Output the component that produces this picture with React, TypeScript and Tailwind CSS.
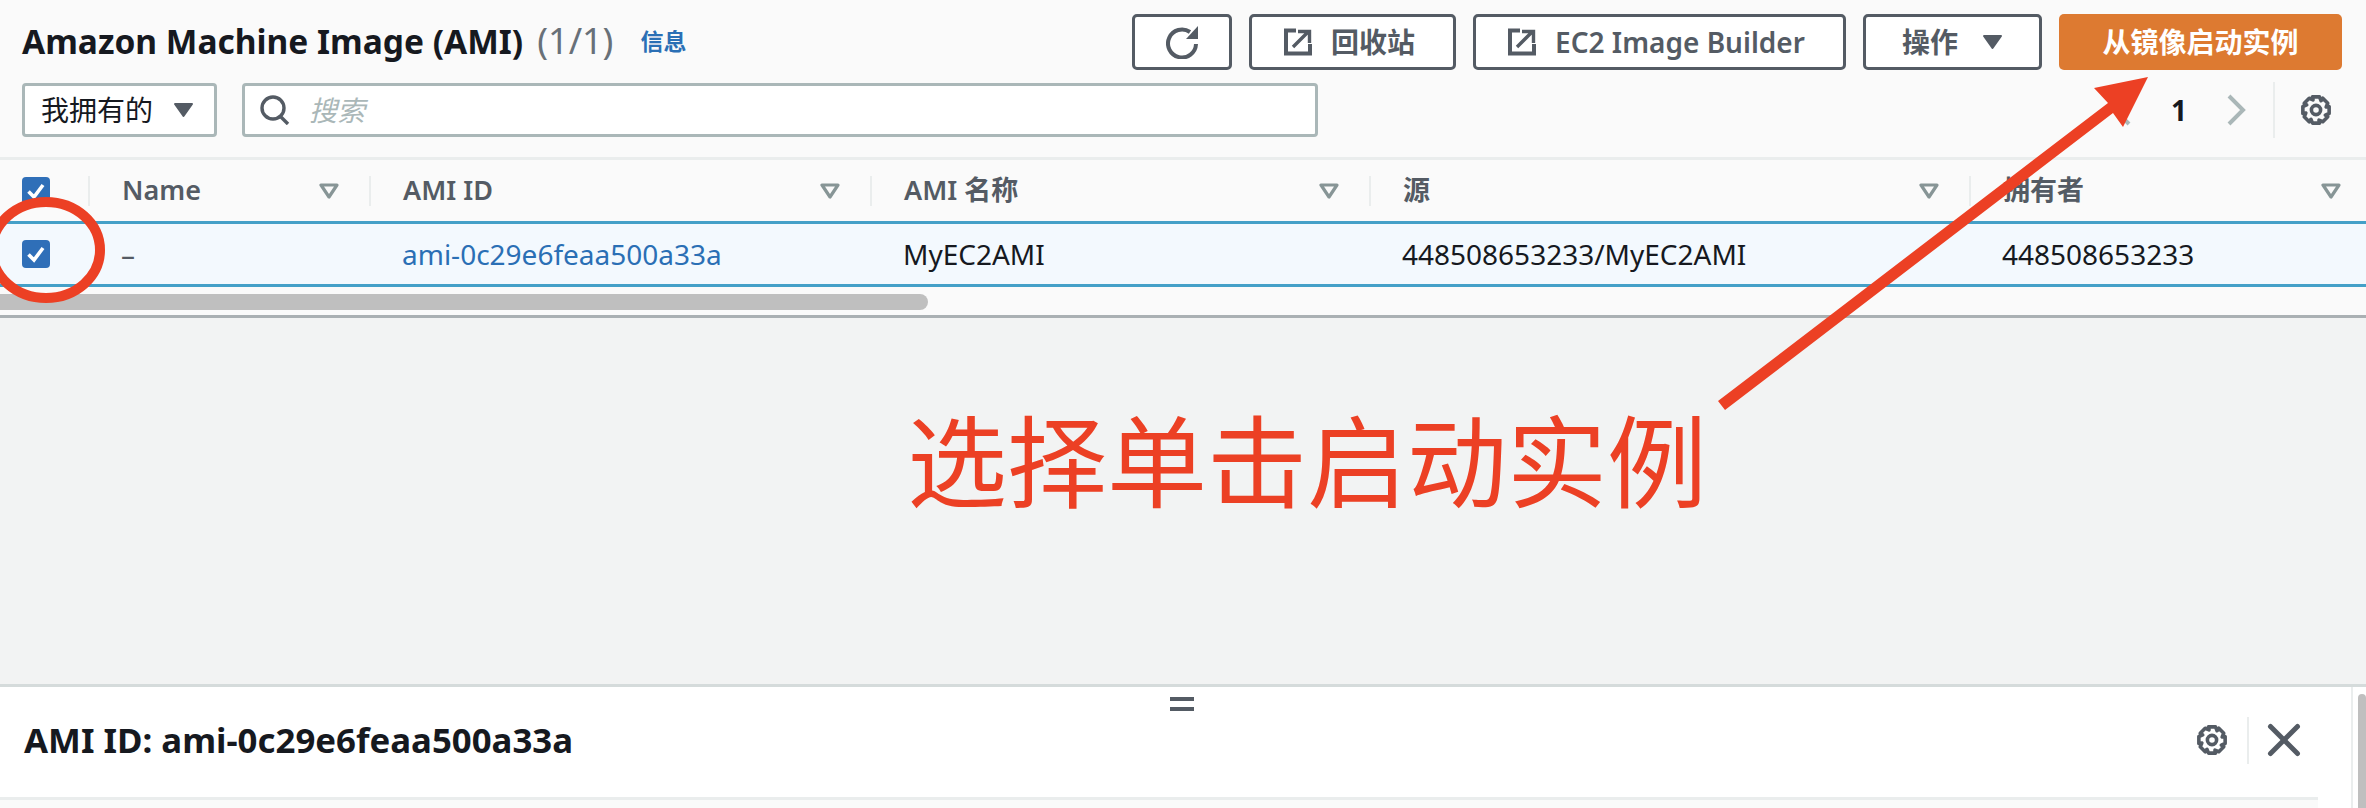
import React from "react";
import { X } from "lucide-react";

function gearPoints() {
  const pts: string[] = [];
  for (let i = 0; i < 8; i++) {
    const a = (i * Math.PI) / 4;
    for (const [off, r] of [[-0.26, 13.6], [0.26, 13.6], [0.5, 10.6]] as const) {
      const x = 16 + r * Math.sin(a + off);
      const y = 16 - r * Math.cos(a + off);
      pts.push(`${x.toFixed(2)},${y.toFixed(2)}`);
    }
  }
  return pts.join(" ");
}

function GearIcon() {
  return (
    <svg width="32" height="32" viewBox="0 0 32 32" fill="none" stroke="#545b64" strokeWidth="3.6" strokeLinejoin="round">
      <polygon points={gearPoints()} />
      <circle cx="16" cy="16" r="4.600" />
    </svg>
  );
}

function ExternalIcon() {
  return (
    <svg width="28" height="28" viewBox="0 0 28 28" fill="none" stroke="#545b64">
      <path d="M12 2.500H2v23h24V16" strokeWidth="4" />
      <path d="M9 19 24 4M14 3.500h11.500V15" strokeWidth="3.400" />
    </svg>
  );
}

function RefreshIcon() {
  return (
    <svg width="32" height="33" viewBox="0 0 32 33" fill="none" stroke="#545b64" strokeWidth="4">
      <path d="M30 18A14 14 0 1 1 24 6" />
      <path d="M32 0v13H20z" fill="#545b64" stroke="none" />
    </svg>
  );
}

function Caret() {
  return (
    <svg width="21" height="16" viewBox="0 0 21 16" fill="#545b64" stroke="#545b64" strokeWidth="2" strokeLinejoin="round">
      <path d="M2 2h17l-8.500 12z" />
    </svg>
  );
}

function FilterIcon() {
  return (
    <svg width="20" height="16" viewBox="0 0 20 16" fill="none" stroke="#879596" strokeWidth="3.2" strokeLinejoin="round">
      <path d="M2 2h16l-8 12z" />
    </svg>
  );
}

function Check() {
  return (
    <span className="flex h-[28px] w-[28px] items-center justify-center rounded-[4px] bg-[#2f6fb8]">
      <svg width="20" height="20" viewBox="0 0 20 20" fill="none" stroke="#fff" strokeWidth="3.6">
        <path d="M2.500 10.500 8 16 17 4" />
      </svg>
    </span>
  );
}

function ToolButton({ width, gap = "gap-[19px]", children }: { width: string; gap?: string; children: React.ReactNode }) {
  return (
    <button className={`flex h-[56px] items-center justify-center rounded-[5px] border-[3px] border-[#545b64] bg-white text-[28px] font-semibold text-[#545b64] ${gap} ${width}`}>
      {children}
    </button>
  );
}

function HeaderCell({ label }: { label: string }) {
  return (
    <div className="flex items-center">
      <div className="flex h-[30px] w-full items-center justify-between border-l-2 border-[#eaeded] pl-[32px] pr-[30px]">
        <span className="text-[27px] font-semibold text-[#545b64]">{label}</span>
        <FilterIcon />
      </div>
    </div>
  );
}

export default function App() {
  const cols = "grid grid-cols-[88px_281px_501px_499px_600px_402px]";
  return (
    <div className="relative flex h-[808px] w-[2366px] flex-col overflow-hidden bg-[#f2f3f3] font-['Noto_Sans','Noto_Sans_CJK_SC',sans-serif]">
      <section className="h-[318px] border-b-[3px] border-[#aab0b3] bg-[#fafafa]">
        <div className="h-[160px] border-b-[3px] border-[#eaeded] pl-[22px] pr-[24px] pt-[14px]">
          <div className="flex h-[56px] items-center justify-between">
            <div className="flex items-center pb-[2px]">
              <h1 className="text-[33.500px] font-bold text-[#16191f]">Amazon Machine Image (AMI)</h1>
              <span className="ml-[14px] text-[36px] text-[#687078]">(1/1)</span>
              <a className="ml-[27px] text-[23px] font-semibold text-[#2a6fb5]">信息</a>
            </div>
            <div className="flex gap-[17px]">
              <ToolButton width="w-[100px]"><RefreshIcon /></ToolButton>
              <ToolButton width="w-[207px] pr-[6px]"><ExternalIcon />回收站</ToolButton>
              <ToolButton width="w-[373px] pr-[6px]"><ExternalIcon />EC2 Image Builder</ToolButton>
              <ToolButton width="w-[179px]" gap="gap-[24px]">操作<Caret /></ToolButton>
              <button className="flex h-[56px] w-[283px] items-center justify-center rounded-[5px] bg-[#dd7a31] text-[28px] font-bold text-white">从镜像启动实例</button>
            </div>
          </div>
          <div className="mt-[13px] flex h-[54px] items-center justify-between">
            <div className="flex gap-[25px]">
              <div className="flex h-[54px] w-[195px] items-center justify-between rounded-[4px] border-[3px] border-[#aab7b8] bg-white pl-[16px] pr-[20px] text-[28px] text-[#16191f]">
                我拥有的
                <Caret />
              </div>
              <div className="flex h-[54px] w-[1076px] items-center gap-[18px] rounded-[4px] border-[3px] border-[#aab7b8] bg-white pl-[15px]">
                <svg width="31" height="30" viewBox="0 0 31 30" fill="none" stroke="#545b64" strokeWidth="3.4">
                  <circle cx="13" cy="13" r="11" />
                  <path d="m20 21 8 8" />
                </svg>
                <span className="text-[28px] italic text-[#aab7b8]">搜索</span>
              </div>
            </div>
            <div className="mr-[10px] flex items-center">
              <svg width="20" height="32" viewBox="0 0 20 32" fill="none" stroke="#aab7b8" strokeWidth="4">
                <path d="M17 2 3 16l14 14" />
              </svg>
              <span className="ml-[39px] text-[28px] font-bold text-[#16191f]">1</span>
              <svg className="ml-[39px]" width="20" height="32" viewBox="0 0 20 32" fill="none" stroke="#aab7b8" strokeWidth="4">
                <path d="m3 2 14 14L3 30" />
              </svg>
              <div className="ml-[27px] h-[56px] w-[2px] bg-[#eaeded]" />
              <div className="ml-[25px]"><GearIcon /></div>
            </div>
          </div>
        </div>

        <div className={`${cols} h-[61px]`}>
          <div className="flex items-center pl-[22px]"><Check /></div>
          <HeaderCell label="Name" />
          <HeaderCell label="AMI ID" />
          <HeaderCell label="AMI 名称" />
          <HeaderCell label="源" />
          <HeaderCell label="拥有者" />
        </div>
        <div className={`${cols} h-[66px] items-center border-y-[3px] border-[#44a0c8] bg-[#f3f9fe] text-[28px] text-[#16191f]`}>
          <div className="pl-[22px]"><Check /></div>
          <div className="pl-[33px] text-[#545b64]">–</div>
          <a className="pl-[33px] text-[#2a6fb5]">ami-0c29e6feaa500a33a</a>
          <div className="pl-[33px]">MyEC2AMI</div>
          <div className="pl-[33px]">448508653233/MyEC2AMI</div>
          <div className="pl-[33px]">448508653233</div>
        </div>
        <div className="mt-[7px] h-[16px] w-[928px] rounded-r-full bg-[#bfbfbf]" />
      </section>

      <div className="flex-1" />

      <section className="flex h-[124px] border-t-[3px] border-[#d5dbdb] bg-white">
        <div className="flex-1">
          <div className="flex h-[110px] items-center justify-between pb-[4px] pl-[24px] pr-[40px]">
            <h2 className="text-[34.800px] font-bold text-[#16191f]">AMI ID: ami-0c29e6feaa500a33a</h2>
            <div className="flex items-center">
              <GearIcon />
              <div className="ml-[19px] mr-[8px] h-[47px] w-[2px] bg-[#eaeded]" />
              <X size={54} color="#545b64" strokeWidth={2.2} />
            </div>
          </div>
          <div className="mr-[33px] h-full border-t-[3px] border-[#eaeded] bg-[#fafafa]" />
        </div>
        <div className="w-[15px] border-l-2 border-[#eaeded]">
          <div className="ml-[5px] mt-[7px] h-full w-[8px] rounded-t-full bg-[#bfbfbf]" />
        </div>
      </section>

      {/* handle on the split panel */}
      <div className="absolute left-[1170px] top-[697px] flex w-[24px] flex-col gap-[6px]">
        <div className="h-[4px] bg-[#545b64]" />
        <div className="h-[4px] bg-[#545b64]" />
      </div>

      {/* red annotations */}
      <svg className="absolute left-0 top-0" width="2366" height="808" fill="none">
        <ellipse cx="46" cy="250" rx="54" ry="48" stroke="#ec4024" strokeWidth="10" />
        <path d="M1718 401 2108 103 2094 88 2148 77 2123 127 2113 113 1725 410z" fill="#ec4024" />
      </svg>
      <div className="absolute left-[907px] top-[386px] text-[100px] leading-[150px] text-[#ec4024]">选择单击启动实例</div>
    </div>
  );
}
